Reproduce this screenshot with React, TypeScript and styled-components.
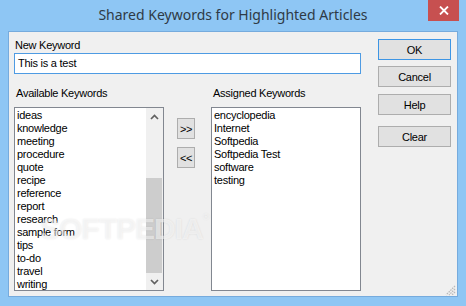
import React from "react";
import styled, { createGlobalStyle } from "styled-components";

const Global = createGlobalStyle`
  html, body { margin: 0; padding: 0; width: 466px; height: 306px; overflow: hidden; background: #8ec6f4; }
  #root { width: 466px; height: 306px; }
  * { box-sizing: border-box; }
`;

const Window = styled.div`
  width: 466px;
  height: 306px;
  display: flex;
  flex-direction: column;
  background: #8ec6f4;
  font-family: "Liberation Sans", Arial, sans-serif;
`;

const TitleBar = styled.div`
  height: 31px;
  flex-shrink: 0;
  display: grid;
  grid-template-columns: 1fr auto 1fr;
  align-items: start;
`;

const Title = styled.div`
  grid-column: 2;
  font-family: "Noto Sans", "Open Sans", sans-serif;
  font-size: 14px;
  line-height: 30px;
  color: #2e3a46;
  white-space: nowrap;
`;

const CloseBtn = styled.div`
  grid-column: 3;
  justify-self: end;
  margin-right: 7px;
  width: 31px;
  height: 21px;
  background: #c75050;
  display: flex;
  align-items: center;
  justify-content: center;
`;

const Client = styled.div`
  position: relative;
  flex: 1;
  margin: 0 8px 9px;
  background: #f0f0f0;
  border: 1px solid #76abdd;
  display: flex;
  align-items: flex-start;
  padding: 7px 0 0 5px;
`;

const LeftPane = styled.div`
  width: 347px;
  display: flex;
  flex-direction: column;
`;

const Label = styled.div<{ $ml?: number }>`
  height: 13px;
  line-height: 13px;
  font-size: 11px;
  letter-spacing: -0.25px;
  color: #000;
  margin-left: ${(p) => p.$ml ?? 2}px;
  white-space: nowrap;
`;

const TextInput = styled.div`
  margin-top: 1px;
  width: 347px;
  height: 21px;
  border: 1px solid #4e9be3;
  background: #fff;
  padding: 0 0 0 3px;
  font-size: 11px;
  letter-spacing: -0.25px;
  line-height: 19px;
  color: #000;
`;

const ListsRow = styled.div`
  margin-top: 13px;
  display: flex;
  align-items: flex-start;
`;

const ListCol = styled.div`
  width: 150px;
  display: flex;
  flex-direction: column;
`;

const ListBox = styled.div`
  margin-top: 7px;
  width: 150px;
  height: 184px;
  border: 1px solid #828790;
  background: #fff;
  display: flex;
  overflow: hidden;
`;

const Items = styled.div`
  flex: 1;
  padding: 1px 2px 0;
  overflow: hidden;
`;

const Item = styled.div`
  height: 13px;
  line-height: 13px;
  font-size: 11px;
  letter-spacing: -0.25px;
  color: #000;
  white-space: nowrap;
`;

const ScrollBar = styled.div`
  width: 17px;
  background: #f0f0f0;
  display: flex;
  flex-direction: column;
`;

const ScrollArrow = styled.div`
  height: 17px;
  display: flex;
  align-items: center;
  justify-content: center;
`;

const Track = styled.div`
  flex: 1;
  display: flex;
  flex-direction: column;
  justify-content: flex-end;
`;

const Thumb = styled.div`
  height: 95px;
  margin: 0 1px 0 0;
  background: #cdcdcd;
`;

const MoveCol = styled.div`
  margin: 31px 16px 0 13px;
  display: flex;
  flex-direction: column;
  gap: 8px;
`;

const SmallBtn = styled.div`
  width: 18px;
  height: 21px;
  border: 1px solid #adadad;
  background: #e1e1e1;
  font-size: 11px;
  letter-spacing: -0.5px;
  display: flex;
  align-items: center;
  justify-content: center;
  color: #000;
`;

const ButtonCol = styled.div`
  margin-left: 17px;
  width: 73px;
  display: flex;
  flex-direction: column;
`;

const Button = styled.div<{ $default?: boolean; $mt?: number }>`
  width: 73px;
  height: 21px;
  margin-top: ${(p) => p.$mt ?? 0}px;
  border: 1px solid ${(p) => (p.$default ? "#3d95e4" : "#adadad")};
  background: #e1e1e1;
  font-size: 11px;
  letter-spacing: -0.25px;
  color: #000;
  display: flex;
  align-items: center;
  justify-content: center;
`;

const Watermark = styled.div`
  position: absolute;
  left: 31px;
  top: 180px;
  font-family: "Liberation Sans", Arial, sans-serif;
  font-weight: bold;
  font-size: 30px;
  letter-spacing: -1px;
  color: rgba(255, 255, 255, 0.55);
  text-shadow: 0 0 2px rgba(0, 0, 0, 0.1);
  pointer-events: none;
  white-space: nowrap;
`;

const Reg = styled.span`
  font-size: 9px;
  vertical-align: top;
  font-weight: normal;
`;

const Grip = styled.svg`
  position: absolute;
  right: 1px;
  bottom: 0;
`;

const available = [
  "ideas",
  "knowledge",
  "meeting",
  "procedure",
  "quote",
  "recipe",
  "reference",
  "report",
  "research",
  "sample form",
  "tips",
  "to-do",
  "travel",
  "writing",
];

const assigned = ["encyclopedia", "Internet", "Softpedia", "Softpedia Test", "software", "testing"];

const Chevron = ({ up }: { up: boolean }) => (
  <svg width="9" height="6" viewBox="0 0 9 6">
    <polyline
      points={up ? "1,5 4.5,1.5 8,5" : "1,1 4.5,4.5 8,1"}
      fill="none"
      stroke="#606060"
      strokeWidth="1.7"
    />
  </svg>
);

export default function App() {
  return (
    <>
      <Global />
      <Window>
        <TitleBar>
          <Title>Shared Keywords for Highlighted Articles</Title>
          <CloseBtn>
            <svg width="10" height="9" viewBox="0 0 10 9">
              <path d="M1 0.5 L9 8.5 M9 0.5 L1 8.5" stroke="#fff" strokeWidth="1.8" />
            </svg>
          </CloseBtn>
        </TitleBar>
        <Client>
          <LeftPane>
            <Label $ml={1}>New Keyword</Label>
            <TextInput>This is a test</TextInput>
            <ListsRow>
              <ListCol>
                <Label>Available Keywords</Label>
                <ListBox>
                  <Items>
                    {available.map((a) => (
                      <Item key={a}>{a}</Item>
                    ))}
                  </Items>
                  <ScrollBar>
                    <ScrollArrow>
                      <Chevron up />
                    </ScrollArrow>
                    <Track>
                      <Thumb />
                    </Track>
                    <ScrollArrow>
                      <Chevron up={false} />
                    </ScrollArrow>
                  </ScrollBar>
                </ListBox>
              </ListCol>
              <MoveCol>
                <SmallBtn>&gt;&gt;</SmallBtn>
                <SmallBtn>&lt;&lt;</SmallBtn>
              </MoveCol>
              <ListCol>
                <Label>Assigned Keywords</Label>
                <ListBox>
                  <Items>
                    {assigned.map((a) => (
                      <Item key={a}>{a}</Item>
                    ))}
                  </Items>
                </ListBox>
              </ListCol>
            </ListsRow>
          </LeftPane>
          <ButtonCol>
            <Button $default>OK</Button>
            <Button $mt={6}>Cancel</Button>
            <Button $mt={7}>Help</Button>
            <Button $mt={11}>Clear</Button>
          </ButtonCol>
          <Watermark>
            SOFTPEDIA<Reg>®</Reg>
          </Watermark>
          <Grip width="12" height="12" viewBox="0 0 12 12">
            <path d="M11 2 L2 11 M11 5 L5 11 M11 8 L8 11" stroke="#b9b9b9" strokeWidth="1.3" strokeDasharray="1.5 1" />
          </Grip>
        </Client>
      </Window>
    </>
  );
}
